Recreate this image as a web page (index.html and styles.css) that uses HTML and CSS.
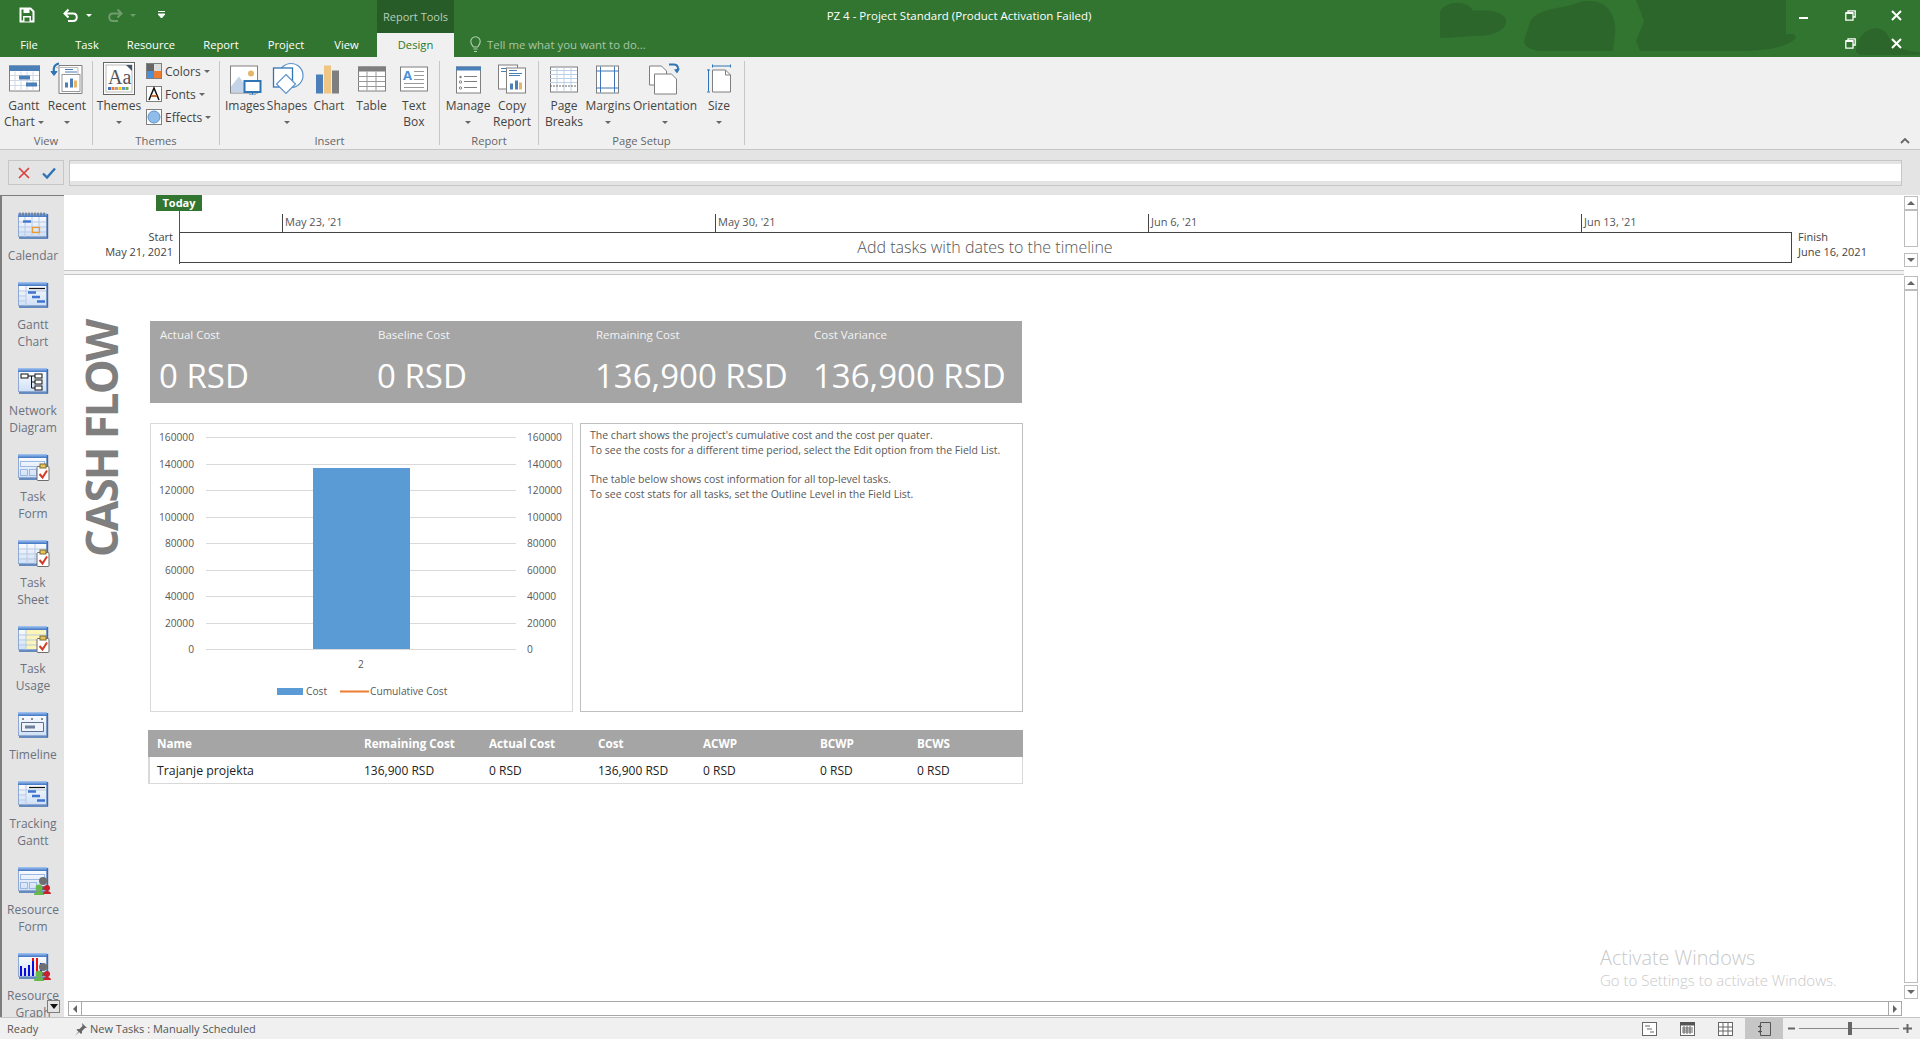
FILE: index.html
```html
<!DOCTYPE html>
<html lang="en">
<head>
<meta charset="utf-8">
<title>PZ 4 - Project Standard</title>
<link rel="stylesheet" href="styles.css">
</head>
<body>
<svg class="defs" aria-hidden="true">
  <defs>
    <linearGradient id="vb" x1="0" y1="0" x2="0" y2="1"><stop offset="0" stop-color="#ffffff"/><stop offset="1" stop-color="#cfe0f7"/></linearGradient>
    <linearGradient id="vh" x1="0" y1="0" x2="0" y2="1"><stop offset="0" stop-color="#a9c8f2"/><stop offset="1" stop-color="#3f74c4"/></linearGradient>
    <symbol id="frame" viewBox="0 0 34 30">
      <rect x="1.500" y="1.500" width="28" height="23" fill="url(#vb)" stroke="#8fa9d0"/>
      <rect x="1" y="1" width="29" height="4" fill="url(#vh)"/>
      <path d="M30.500 2v24H2" fill="none" stroke="#3a6cb4" stroke-width="1.400"/>
    </symbol>
    <symbol id="clip" viewBox="0 0 34 30">
      <rect x="20" y="13.500" width="12" height="14" rx="1" fill="#fff" stroke="#6d6d6d"/>
      <rect x="23" y="11" width="6" height="4" fill="#e8c35c" stroke="#7a6a30"/>
      <path d="M22.500 21l3 3.500 4.500-7" fill="none" stroke="#d23a22" stroke-width="2"/>
    </symbol>
    <symbol id="people" viewBox="0 0 34 30">
      <circle cx="26" cy="15" r="4" fill="#6f6f6f"/><path d="M20 24c0-5 12-5 12 0z" fill="#5f5f5f"/>
      <circle cx="22" cy="22" r="3.400" fill="#67b84a"/><path d="M17 29c0-5 10-5 10 0z" fill="#67b84a"/>
      <circle cx="30" cy="22" r="3" fill="#c8202c"/><path d="M26 28c0-4 8-4 8 0z" fill="#c8202c"/>
    </symbol>
    <symbol id="ganttv" viewBox="0 0 34 30">
      <use href="#frame" width="34" height="30"/>
      <path d="M2 10h27M2 15h7M2 20h7M9 5v20" stroke="#b9c9e2" fill="none"/>
      <path d="M12 7.500h16" stroke="#111" stroke-width="1.200"/>
      <path d="M11 11.500h8M15 16h8M20 20.500h8" stroke="#3f74d0" stroke-width="2.400"/>
    </symbol>
  </defs>
</svg>

<header class="titlebar">
  <svg class="blobs" viewBox="0 0 520 57" aria-hidden="true"><g fill="#2c662b">
    <path d="M40 12c6-12 28-12 33-1 10-2 32 0 33 9 1 10-12 16-30 16-18 1-33 2-36 2z"/>
    <path d="M130 22c6-14 35-14 44-18 24-10 44 4 41 30l-2 17H140c-8-1-15-3-16-10z"/>
    <path d="M236 0h150v34l8 0 2 4c-10 10-30 13-60 13H240l-4-10 8-20z"/>
    <path d="M456 52c0-22 24-32 32-16 6 12 20 16 32 16v-4 7h-60z"/>
  </g></svg>
  <div class="title-top">
    <div class="qat">
      <svg class="q-save" width="16" height="16" viewBox="0 0 16 16"><path d="M1.500 1.500h10l3 3v10h-13z" fill="none" stroke="#fff" stroke-width="2"/><rect x="4.500" y="2" width="6" height="4" fill="#fff"/><rect x="4" y="9" width="8" height="5" fill="#fff"/><rect x="5.500" y="10.500" width="5" height="4" fill="#327530"/></svg>
      <svg class="q-undo" width="16" height="15" viewBox="0 0 16 15"><path d="M5.500 1.500L1.500 5.500l4 4M2 5.500h8c5 0 5 7.500 0 7.500H5" fill="none" stroke="#fff" stroke-width="2"/></svg>
      <span class="caret q-c1"></span>
      <svg class="q-redo" width="16" height="15" viewBox="0 0 16 15"><path d="M10.500 1.500l4 4-4 4M14 5.500H6c-5 0-5 7.500 0 7.500h5" fill="none" stroke="#6f9d6e" stroke-width="2"/></svg>
      <span class="caret q-c2"></span>
      <svg class="q-cust" width="7" height="8" viewBox="0 0 7 8"><path d="M0 .5h7M0 3h7L3.500 7z" stroke="#fff" fill="#fff" stroke-width="1"/></svg>
    </div>
    <div class="context-label">Report Tools</div>
    <div class="doc-title">PZ 4 - Project Standard (Product Activation Failed)</div>
    <div class="winbtns">
      <svg width="10" height="10" viewBox="0 0 10 10"><path d="M0 7h9" stroke="#fff" stroke-width="2"/></svg>
      <svg class="w-rest" width="11" height="11" viewBox="0 0 11 11"><path d="M3 2.500V.8h7.200V7H8M.8 3h7.200v7.200H.8z" fill="none" stroke="#fff" stroke-width="1.300"/><path d="M1 3h7" stroke="#fff" stroke-width="2"/></svg>
      <svg class="w-close" width="11" height="11" viewBox="0 0 11 11"><path d="M1 1l9 9M10 1l-9 9" stroke="#fff" stroke-width="2"/></svg>
    </div>
  </div>
  <div class="title-tabs">
    <nav class="tabs">
      <span class="tab tab-file">File</span>
      <span class="tab tab-task">Task</span>
      <span class="tab tab-res">Resource</span>
      <span class="tab tab-rep">Report</span>
      <span class="tab tab-proj">Project</span>
      <span class="tab tab-view">View</span>
      <span class="tab tab-design">Design</span>
    </nav>
    <div class="tellme">
      <svg width="11" height="17" viewBox="0 0 11 17"><path d="M3.500 11C2 9 .8 8 .8 5.500a4.700 4.700 0 0 1 9.400 0C10.200 8 9 9 7.500 11zM3.500 13h4M4 15.500h3" fill="none" stroke="#b6d0b5" stroke-width="1.100"/></svg>
      <span>Tell me what you want to do...</span>
    </div>
    <div class="winbtns winbtns-doc">
      <svg class="w-rest" width="11" height="11" viewBox="0 0 11 11"><path d="M3 2.500V.8h7.200V7H8M.8 3h7.200v7.200H.8z" fill="none" stroke="#fff" stroke-width="1.300"/><path d="M1 3h7" stroke="#fff" stroke-width="2"/></svg>
      <svg class="w-close" width="11" height="11" viewBox="0 0 11 11"><path d="M1 1l9 9M10 1l-9 9" stroke="#fff" stroke-width="2"/></svg>
    </div>
  </div>
</header>

<section class="ribbon">
  <div class="rgroup g-view">
    <div class="rbuttons">
      <div class="rbtn w42">
        <svg class="ricon" width="34" height="32" viewBox="0 0 34 32"><rect x="2.500" y="3.500" width="30" height="25" fill="#fff" stroke="#7f7f7f"/><rect x="2" y="3" width="31" height="5.500" fill="#4a7fb8"/><path d="M8 9v19M14 9v19M20 9v19M26 9v19M3 13h29M3 18h29M3 23h29" stroke="#cfd9e6"/><rect x="12" y="13" width="11" height="4" fill="#4a7fb8"/><rect x="19" y="20" width="11" height="4" fill="#4a7fb8"/></svg>
        <span class="rlabel">Gantt<br>Chart<i class="caret-in"></i></span>
      </div>
      <div class="rbtn w44">
        <svg class="ricon" width="34" height="32" viewBox="0 0 34 32"><path d="M9 3h23v28H9z" fill="#fff" stroke="#7f7f7f"/><path d="M6 5h22v25" fill="none" stroke="#bbb"/><rect x="12" y="12" width="18" height="17" fill="#fff" stroke="#999"/><path d="M15 25v-5h3v5zM20 25v-9h3v9z" fill="#4a7fb8"/><path d="M24 25v-7h3v7z" fill="#e4b768"/><path d="M15 7h8M15 9.500h12" stroke="#4a7fb8"/><path d="M9 1C4 2 3 6 4 10" fill="none" stroke="#2f75b5" stroke-width="2.200"/><path d="M1 9l3 4 3-4z" fill="#2f75b5" stroke="#2f75b5"/></svg>
        <span class="rlabel">Recent<br><i class="caret-in only"></i></span>
      </div>
    </div>
    <div class="gname">View</div>
  </div>

  <div class="rgroup g-themes">
    <div class="rbuttons">
      <div class="rbtn w46">
        <svg class="ricon" width="34" height="33" viewBox="0 0 34 33"><rect x="1.500" y=".5" width="31" height="32" fill="#fff" stroke="#666"/><rect x="4" y="3" width="26" height="27" fill="#fff" stroke="#bbb"/><path d="M24 3h6v6z" fill="#44546a"/><text class="aa" x="6" y="22">Aa</text><g><rect x="6" y="25" width="3" height="3" fill="#4472c4"/><rect x="9.500" y="25" width="3" height="3" fill="#ed7d31"/><rect x="13" y="25" width="3" height="3" fill="#a5a5a5"/><rect x="16.500" y="25" width="3" height="3" fill="#ffc000"/><rect x="20" y="25" width="3" height="3" fill="#5b9bd5"/><rect x="23.500" y="25" width="3" height="3" fill="#70ad47"/></g></svg>
        <span class="rlabel">Themes<br><i class="caret-in only"></i></span>
      </div>
      <div class="rsmall-col">
        <div class="rsmall">
          <svg width="16" height="16" viewBox="0 0 16 16"><rect x=".5" y=".5" width="15" height="15" fill="#fff" stroke="#7f7f7f"/><rect x="1" y="1" width="7" height="7" fill="#666"/><rect x="8" y="1" width="7" height="7" fill="#ddd"/><rect x="1" y="8" width="7" height="7" fill="#4a90d9"/><rect x="8" y="8" width="7" height="7" fill="#ed7d31"/></svg>
          <span>Colors</span><i class="caret-in"></i>
        </div>
        <div class="rsmall">
          <svg width="16" height="16" viewBox="0 0 16 16"><rect x=".5" y=".5" width="15" height="15" fill="#fff" stroke="#7f7f7f"/><path d="M3 14L8 2l5 12M5 10h6" fill="none" stroke="#111" stroke-width="1.500"/><path d="M5 10h6" stroke="#ed7d31" stroke-width="1.500"/></svg>
          <span>Fonts</span><i class="caret-in"></i>
        </div>
        <div class="rsmall">
          <svg width="16" height="16" viewBox="0 0 16 16"><rect x=".5" y=".5" width="15" height="15" fill="#fff" stroke="#7f7f7f"/><circle cx="8" cy="8" r="6" fill="#8fbce8" stroke="#5c93cc"/></svg>
          <span>Effects</span><i class="caret-in"></i>
        </div>
      </div>
    </div>
    <div class="gname">Themes</div>
  </div>

  <div class="rgroup g-insert">
    <div class="rbuttons">
      <div class="rbtn w42">
        <svg class="ricon" width="34" height="32" viewBox="0 0 34 32"><rect x="2.500" y="3.500" width="27" height="27" fill="#fff" stroke="#7f7f7f"/><circle cx="23" cy="11" r="3" fill="#e4b768"/><path d="M3 30v-6l8-10 12 16z" fill="#c3d4e8"/><rect x="16.500" y="18.500" width="16" height="11" fill="#fff" stroke="#2f75b5" stroke-width="2"/><path d="M24.500 30v2M21 32.500h7" stroke="#2f75b5"/></svg>
        <span class="rlabel">Images</span>
      </div>
      <div class="rbtn w42">
        <svg class="ricon" width="34" height="32" viewBox="0 0 34 32"><circle cx="21" cy="13" r="12" fill="#fff" stroke="#5c93cc" stroke-width="1.200"/><rect x="3.500" y="5.500" width="19" height="19" fill="#fff" stroke="#2f75b5" stroke-width="1.300"/><path d="M16 15l9.500 9.500L16 34 6.500 24.500z" transform="translate(0 -3)" fill="#fff" stroke="#5c93cc" stroke-width="1.200"/></svg>
        <span class="rlabel">Shapes<br><i class="caret-in only"></i></span>
      </div>
      <div class="rbtn w42">
        <svg class="ricon" width="34" height="32" viewBox="0 0 34 32"><rect x="4" y="12" width="7" height="19" fill="#4a7fb8"/><rect x="12" y="3" width="7" height="28" fill="#eec583"/><rect x="20" y="8" width="7" height="23" fill="#7f7f7f"/></svg>
        <span class="rlabel">Chart</span>
      </div>
      <div class="rbtn w43">
        <svg class="ricon" width="34" height="32" viewBox="0 0 34 32"><rect x="3.500" y="4.500" width="27" height="24" fill="#fff" stroke="#7f7f7f"/><rect x="3" y="4" width="28" height="5" fill="#7f7f7f"/><path d="M12 9v19M21 9v19M3 14h27M3 19h27M3 24h27" stroke="#999"/></svg>
        <span class="rlabel">Table</span>
      </div>
      <div class="rbtn w42">
        <svg class="ricon" width="34" height="32" viewBox="0 0 34 32"><rect x="3.500" y="4.500" width="27" height="24" fill="#fff" stroke="#7f7f7f"/><text class="tb-a" x="6" y="17">A</text><path d="M17 9h10M17 13h10M17 17h10M7 21h20M7 25h20" stroke="#999"/></svg>
        <span class="rlabel">Text<br>Box</span>
      </div>
    </div>
    <div class="gname">Insert</div>
  </div>

  <div class="rgroup g-report">
    <div class="rbuttons">
      <div class="rbtn w48">
        <svg class="ricon" width="34" height="32" viewBox="0 0 34 32"><rect x="5.500" y="4.500" width="24" height="26" fill="#fff" stroke="#7f7f7f"/><rect x="5" y="4" width="25" height="4" fill="#4a7fb8"/><path d="M13 14h13M13 19h13M13 25h13" stroke="#7f7f7f"/><circle cx="9.500" cy="14.500" r="1.200" fill="#7f7f7f"/><circle cx="9.500" cy="19.500" r="1.200" fill="none" stroke="#7f7f7f"/><circle cx="9.500" cy="25.500" r="1.200" fill="none" stroke="#7f7f7f"/></svg>
        <span class="rlabel">Manage<br><i class="caret-in only"></i></span>
      </div>
      <div class="rbtn w40">
        <svg class="ricon" width="34" height="32" viewBox="0 0 34 32"><rect x="3.500" y="2.500" width="19" height="24" fill="#fff" stroke="#7f7f7f"/><rect x="11.500" y="5.500" width="19" height="25" fill="#fff" stroke="#7f7f7f"/><path d="M14 8h8M14 11h13M14 13h11M6 6h5M6 9h5" stroke="#4a7fb8"/><path d="M15 27v-6h3v6zM20 27v-9h3v9z" fill="#4a7fb8"/><path d="M24 27v-7h3v7z" fill="#e4b768"/></svg>
        <span class="rlabel">Copy<br>Report</span>
      </div>
    </div>
    <div class="gname">Report</div>
  </div>

  <div class="rgroup g-page">
    <div class="rbuttons">
      <div class="rbtn w42">
        <svg class="ricon" width="34" height="32" viewBox="0 0 34 32"><rect x="3.500" y="4.500" width="27" height="25" fill="#fff" stroke="#7f7f7f"/><path d="M3 8h27M3 12h27M3 16h27M3 20h27M10 5v24M17 5v24M24 5v24" stroke="#bcd0e8"/><path d="M3 23.500h27" stroke="#666" stroke-dasharray="2 1"/></svg>
        <span class="rlabel">Page<br>Breaks</span>
      </div>
      <div class="rbtn w46">
        <svg class="ricon" width="34" height="32" viewBox="0 0 34 32"><rect x="5.500" y="3.500" width="22" height="27" fill="#fff" stroke="#7f7f7f"/><path d="M5 8.500h23M5 25.500h23M9.500 4v26M23.500 4v26" stroke="#3f74b5"/></svg>
        <span class="rlabel">Margins<br><i class="caret-in only"></i></span>
      </div>
      <div class="rbtn w68">
        <svg class="ricon" width="34" height="32" viewBox="0 0 34 32"><path d="M1.500 3.500h12l5 5v14h-17z" fill="#fff" stroke="#7f7f7f"/><path d="M6.500 12.500h17l5 5v15h-22z" transform="translate(0 -1)" fill="#fff" stroke="#7f7f7f"/><path d="M21 2h5c4 0 5 4 3 7" fill="none" stroke="#2f75b5" stroke-width="2"/><path d="M26 7l3 4 3-5z" fill="#2f75b5"/></svg>
        <span class="rlabel">Orientation<br><i class="caret-in only"></i></span>
      </div>
      <div class="rbtn w40">
        <svg class="ricon" width="34" height="32" viewBox="0 0 34 32"><path d="M10.500 7.500h13l5 5v17h-18z" fill="#fff" stroke="#7f7f7f"/><path d="M23.500 7.500v5h5" fill="none" stroke="#7f7f7f"/><path d="M10 3.500h19M10.500 2v3M28.500 2v3M6.500 7v22M5 7.500h3M5 29.500h3" stroke="#2f75b5"/></svg>
        <span class="rlabel">Size<br><i class="caret-in only"></i></span>
      </div>
    </div>
    <div class="gname">Page Setup</div>
  </div>
  <svg class="collapse" width="10" height="6" viewBox="0 0 10 6"><path d="M1 5l4-4 4 4" fill="none" stroke="#666" stroke-width="1.800"/></svg>
</section>

<section class="formula">
  <div class="f-actions">
    <svg width="12" height="12" viewBox="0 0 12 12"><path d="M1 1l10 10M11 1L1 11" stroke="#d8433e" stroke-width="1.700"/></svg>
    <svg width="14" height="12" viewBox="0 0 14 12"><path d="M1 6.500l4 4L13 1.500" fill="none" stroke="#2f75b5" stroke-width="2.400"/></svg>
  </div>
  <div class="f-input"><div class="f-white"></div></div>
</section>

<main class="workspace">
  <aside class="viewbar">
    <div class="vitem">
      <svg width="34" height="30" viewBox="0 0 34 30"><use href="#frame" width="34" height="30"/><path d="M2 10h27M2 15h27M2 20h27M8 5v20M15 5v20M22 5v20" stroke="#b9c9e2"/><path d="M3 .5v3M6 .5v3M9 .5v3M12 .5v3M15 .5v3M18 .5v3M21 .5v3M24 .5v3M27 .5v3" stroke="#555"/><path d="M6 9.500h8" stroke="#3f74d0" stroke-width="2.400"/><rect x="15.500" y="15.500" width="7" height="5" fill="none" stroke="#ee9a2e" stroke-width="1.300"/></svg>
      <span>Calendar</span>
    </div>
    <div class="vitem">
      <svg width="34" height="30" viewBox="0 0 34 30"><use href="#ganttv" width="34" height="30"/></svg>
      <span>Gantt<br>Chart</span>
    </div>
    <div class="vitem">
      <svg width="34" height="30" viewBox="0 0 34 30"><use href="#frame" width="34" height="30"/><g fill="#fff" stroke="#111"><rect x="4" y="7" width="7" height="4"/><rect x="18" y="7" width="7" height="4"/><rect x="18" y="13" width="7" height="4"/><rect x="18" y="19" width="7" height="4"/></g><path d="M11 9h7M14.500 9v12H18M14.500 15H18" fill="none" stroke="#111"/></svg>
      <span>Network<br>Diagram</span>
    </div>
    <div class="vitem">
      <svg width="34" height="30" viewBox="0 0 34 30"><use href="#frame" width="34" height="30"/><rect x="3.500" y="8.500" width="24" height="5" fill="none" stroke="#9db8e2"/><rect x="3.500" y="16.500" width="7" height="6" fill="none" stroke="#9db8e2"/><rect x="12.500" y="16.500" width="7" height="6" fill="none" stroke="#9db8e2"/><use href="#clip" width="34" height="30"/></svg>
      <span>Task<br>Form</span>
    </div>
    <div class="vitem">
      <svg width="34" height="30" viewBox="0 0 34 30"><use href="#frame" width="34" height="30"/><path d="M2 10h27M2 15h27M2 20h27M10 5v20M18 5v20" stroke="#b9c9e2"/><use href="#clip" width="34" height="30"/></svg>
      <span>Task<br>Sheet</span>
    </div>
    <div class="vitem">
      <svg width="34" height="30" viewBox="0 0 34 30"><use href="#frame" width="34" height="30"/><rect x="9" y="5" width="20" height="19" fill="#fdf6b8"/><path d="M2 10h27M2 15h27M2 20h27M9 5v20" stroke="#b9c9e2"/><use href="#clip" width="34" height="30"/></svg>
      <span>Task<br>Usage</span>
    </div>
    <div class="vitem">
      <svg width="34" height="30" viewBox="0 0 34 30"><use href="#frame" width="34" height="30"/><path d="M4.500 11.500h22v9h-22z" fill="#eef3fb" stroke="#5c6f8c"/><rect x="8" y="14.500" width="10" height="3" fill="#6d7f9c"/><path d="M5 8h2M14 8h2M24 8h2" stroke="#222"/></svg>
      <span>Timeline</span>
    </div>
    <div class="vitem">
      <svg width="34" height="30" viewBox="0 0 34 30"><use href="#ganttv" width="34" height="30"/></svg>
      <span>Tracking<br>Gantt</span>
    </div>
    <div class="vitem">
      <svg width="34" height="30" viewBox="0 0 34 30"><use href="#frame" width="34" height="30"/><rect x="3.500" y="8.500" width="24" height="5" fill="none" stroke="#9db8e2"/><rect x="3.500" y="16.500" width="7" height="6" fill="none" stroke="#9db8e2"/><rect x="12.500" y="16.500" width="7" height="6" fill="none" stroke="#9db8e2"/><use href="#people" width="34" height="30"/></svg>
      <span>Resource<br>Form</span>
    </div>
    <div class="vitem">
      <svg width="34" height="30" viewBox="0 0 34 30"><use href="#frame" width="34" height="30"/><path d="M3 14h2v10H3zM7 16h2v8H7zM11 13h2v11h-2zM15 9h2v15h-2zM23 11h2v13h-2z" fill="#0b0be0"/><path d="M19 6h2v18h-2zM15 6h2v3h-2z" fill="#ea1010"/><use href="#people" width="34" height="30"/></svg>
      <span>Resource<br>Graph</span>
    </div>
    <div class="vb-more"><svg width="8" height="5" viewBox="0 0 8 5"><path d="M0 0h8L4 5z" fill="#111"/></svg></div>
  </aside>

  <div class="content">
    <div class="timeline-row">
      <div class="timeline">
        <div class="tl-scale">
          <span class="tick">May 23, '21</span>
          <span class="tick">May 30, '21</span>
          <span class="tick">Jun 6, '21</span>
          <span class="tick">Jun 13, '21</span>
        </div>
        <div class="tl-body">
          <div class="tl-start">Start<br>May 21, 2021</div>
          <div class="tl-bar">Add tasks with dates to the timeline
            <div class="today"><span class="today-flag">Today</span></div>
          </div>
          <div class="tl-finish">Finish<br>June 16, 2021</div>
        </div>
      </div>
      <div class="vscroll vs-small">
        <span class="sbtn"><i class="tri-up"></i></span>
        <span class="thumb th-small"></span>
        <span class="sbtn"><i class="tri-down"></i></span>
      </div>
    </div>
    <div class="splitter"></div>
    <div class="report-row">
      <div class="report">
        <h1 class="report-title">CASH FLOW</h1>
        <div class="report-body">
          <div class="kpis">
            <div class="kpi"><div class="kpi-label">Actual Cost</div><div class="kpi-value">0 RSD</div></div>
            <div class="kpi"><div class="kpi-label">Baseline Cost</div><div class="kpi-value">0 RSD</div></div>
            <div class="kpi"><div class="kpi-label">Remaining Cost</div><div class="kpi-value">136,900 RSD</div></div>
            <div class="kpi"><div class="kpi-label">Cost Variance</div><div class="kpi-value">136,900 RSD</div></div>
          </div>
          <div class="panels">
            <div class="chart">
              <svg width="421" height="287" viewBox="0 0 421 287">
                <g class="gridlines">
                  <path d="M55 13.500h310M55 40.500h310M55 66.500h310M55 93.500h310M55 119.500h310M55 146.500h310M55 172.500h310M55 199.500h310M55 225.500h310"/>
                </g>
                <rect x="162" y="44" width="97" height="181" fill="#5b9bd5"/>
                <g class="axis-l">
                  <text x="43" y="17">160000</text><text x="43" y="44">140000</text><text x="43" y="70">120000</text><text x="43" y="97">100000</text><text x="43" y="123">80000</text><text x="43" y="150">60000</text><text x="43" y="176">40000</text><text x="43" y="203">20000</text><text x="43" y="229">0</text>
                </g>
                <g class="axis-r">
                  <text x="376" y="17">160000</text><text x="376" y="44">140000</text><text x="376" y="70">120000</text><text x="376" y="97">100000</text><text x="376" y="123">80000</text><text x="376" y="150">60000</text><text x="376" y="176">40000</text><text x="376" y="203">20000</text><text x="376" y="229">0</text>
                </g>
                <text class="axis-c" x="210" y="244">2</text>
                <rect x="126" y="264" width="26" height="7" fill="#5b9bd5"/>
                <text class="legend" x="155" y="271">Cost</text>
                <path d="M189 267.500h29" stroke="#ed7d31" stroke-width="2"/>
                <text class="legend" x="219" y="271">Cumulative Cost</text>
              </svg>
            </div>
            <div class="notes">
              <p>The chart shows the project's cumulative cost and the cost per quater.<br>To see the costs for a different time period, select the Edit option from the Field List.</p>
              <p>The table below shows cost information for all top-level tasks.<br>To see cost stats for all tasks, set the Outline Level in the Field List.</p>
            </div>
          </div>
          <div class="ctable">
            <div class="ct-row ct-head">
              <span>Name</span><span>Remaining Cost</span><span>Actual Cost</span><span>Cost</span><span>ACWP</span><span>BCWP</span><span>BCWS</span>
            </div>
            <div class="ct-row ct-data">
              <span>Trajanje projekta</span><span>136,900 RSD</span><span>0 RSD</span><span>136,900 RSD</span><span>0 RSD</span><span>0 RSD</span><span>0 RSD</span>
            </div>
          </div>
        </div>
        <div class="activate">
          <div class="act-1">Activate Windows</div>
          <div class="act-2">Go to Settings to activate Windows.</div>
        </div>
      </div>
      <div class="vscroll">
        <span class="sbtn"><i class="tri-up"></i></span>
        <span class="thumb"></span>
        <span class="sbtn"><i class="tri-down"></i></span>
      </div>
    </div>
    <div class="hscroll">
      <span class="sbtn"><i class="tri-left"></i></span>
      <span class="hthumb"></span>
      <span class="sbtn"><i class="tri-right"></i></span>
    </div>
  </div>
</main>

<footer class="status">
  <span class="st-ready">Ready</span>
  <svg class="st-pin" width="14" height="14" viewBox="0 0 14 14"><path d="M8 1l5 5-2 0-3 3 0 2-1 1-2-2-4 4 3.500-4.500L2.500 8l1-1 2 0 3-3z" fill="#666"/></svg>
  <span class="st-new">New Tasks : Manually Scheduled</span>
  <div class="st-right">
    <svg class="st-v" width="15" height="14" viewBox="0 0 15 14"><rect x=".5" y=".5" width="14" height="13" fill="#fff" stroke="#666"/><path d="M3 4h5M5 7h5M8 10h4" stroke="#666"/></svg>
    <svg class="st-v" width="15" height="14" viewBox="0 0 15 14"><rect x=".5" y=".5" width="14" height="13" fill="#fff" stroke="#666"/><rect x="0" y="0" width="15" height="3.500" fill="#555"/><path d="M2 6h11M2 8h11M2 10h11M4 4v8M7 4v8M10 4v8" stroke="#666"/></svg>
    <svg class="st-v" width="15" height="14" viewBox="0 0 15 14"><rect x=".5" y=".5" width="14" height="13" fill="#fff" stroke="#666"/><path d="M1 5h13M1 9h13M5 1v12M10 1v12" stroke="#666"/></svg>
    <div class="st-active"><svg width="14" height="14" viewBox="0 0 14 14"><path d="M3.500.5h10v13h-10zM1 4.500h4M1 9.500h4M3 3v3M3 8v3" fill="none" stroke="#555"/></svg></div>
    <div class="zoom">
      <svg width="7" height="3" viewBox="0 0 7 3"><path d="M0 1.500h7" stroke="#666" stroke-width="2"/></svg>
      <div class="zoom-track"><span class="zoom-thumb"></span></div>
      <svg width="9" height="9" viewBox="0 0 9 9"><path d="M0 4.500h9M4.500 0v9" stroke="#666" stroke-width="2"/></svg>
    </div>
  </div>
</footer>
</body>
</html>
```
FILE: styles.css
```css
* { box-sizing: border-box; }
html, body { margin: 0; height: 100%; }
body {
  width: 1920px; height: 1039px; overflow: hidden;
  display: flex; flex-direction: column;
  font-family: "Open Sans", "Noto Sans", sans-serif;
  font-size: 12px; color: #444; background: #e4e4e4;
}
.defs { position: absolute; width: 0; height: 0; }

/* title bar */
.titlebar { position: relative; height: 57px; flex: none; background: #327530; color: #fff; display: flex; flex-direction: column; }
.blobs { position: absolute; right: 0; top: 0; width: 520px; height: 57px; }
.title-top { position: relative; height: 33px; display: flex; align-items: center; }
.qat { width: 377px; flex: none; height: 33px; display: flex; align-items: center; padding-left: 19px; }
.q-save { margin-top: -3px; }
.q-undo { margin-left: 28px; margin-top: -3px; }
.caret { display: block; width: 0; height: 0; border-left: 3px solid transparent; border-right: 3px solid transparent; border-top: 3px solid #fff; }
.q-c1 { margin-left: 7px; margin-top: -3px; }
.q-redo { margin-left: 15px; margin-top: -3px; }
.q-c2 { margin-left: 7px; border-top-color: #6f9d6e; margin-top: -3px; }
.q-cust { margin-left: 22px; margin-top: -4px; }
.context-label { width: 77px; flex: none; height: 33px; background: #275c28; color: #b9cfb8; text-align: center; line-height: 33px; font-size: 11px; }
.doc-title { flex: none; width: 1010px; text-align: center; margin-top: -2px; font-size: 11.500px; }
.winbtns { position: relative; display: flex; align-items: center; padding-right: 18px; margin-top: -2px; margin-left: auto; }
.winbtns svg { display: block; }
.w-rest { margin-left: 36px; }
.w-close { margin-left: 35px; }
.title-tabs { position: relative; height: 24px; display: flex; align-items: center; }
.tabs { display: flex; width: 454px; height: 24px; flex: none; font-size: 11.200px; }
.tab { height: 24px; line-height: 24px; text-align: center; flex: none; }
.tab-file { width: 58px; }
.tab-task { width: 58px; }
.tab-res { width: 70px; }
.tab-rep { width: 70px; }
.tab-proj { width: 60px; }
.tab-view { width: 61px; }
.tab-design { width: 77px; background: #f0f0f0; color: #2a7a2a; }
.tellme { display: flex; align-items: center; gap: 6px; margin-left: 16px; margin-top: -2px; color: #a9c6a8; font-size: 11.400px; }
.winbtns-doc { margin-top: -3px; }

/* ribbon */
.ribbon { position: relative; height: 93px; flex: none; background: #f0f0f0; border-bottom: 1px solid #c6c6c6; display: flex; padding-top: 4px; }
.rgroup { height: 84px; border-right: 1px solid #c6c6c6; display: flex; flex-direction: column; flex: none; position: relative; }
.g-view { width: 93px; }
.g-themes { width: 127px; }
.g-insert { width: 220px; }
.g-report { width: 99px; }
.g-page { width: 206px; }
.rbuttons { display: flex; padding: 1px 0 0 3px; flex: 1; min-height: 0; }
.g-insert .rbuttons, .g-report .rbuttons, .g-page .rbuttons { padding-left: 4px; }
.rbtn { display: flex; flex-direction: column; align-items: center; flex: none; }
.w40 { width: 40px; } .w42 { width: 42px; } .w43 { width: 43px; } .w44 { width: 44px; }
.w46 { width: 46px; } .w48 { width: 48px; } .w68 { width: 68px; }
.ricon { display: block; height: 33px; flex: none; }
.rlabel { display: block; text-align: center; line-height: 16px; margin-top: 3px; white-space: nowrap; color: #444; }
.caret-in { display: inline-block; width: 0; height: 0; border-left: 3px solid transparent; border-right: 3px solid transparent; border-top: 3px solid #666; margin-left: 3px; vertical-align: middle; }
.caret-in.only { margin-left: 0; }
.gname { position: absolute; left: 0; right: 0; top: 72px; text-align: center; line-height: 16px; color: #666; font-size: 11.200px; }
.rsmall-col { display: flex; flex-direction: column; gap: 7px; margin: 1px 0 0 4px; }
.rsmall { display: flex; align-items: center; height: 16px; gap: 3px; }
.rsmall .caret-in { margin-left: 0; }
.rsmall svg { flex: none; }
.aa { font: 20px "Liberation Serif", serif; fill: #555; }
.tb-a { font: bold 13px "Open Sans", sans-serif; fill: #4a90d9; }
.collapse { position: absolute; right: 10px; bottom: 5px; }

/* formula */
.formula { height: 45px; flex: none; display: flex; align-items: flex-start; padding: 10px 18px 0 8px; gap: 5px; background: #e4e4e4; }
.f-actions { width: 56px; height: 25px; border: 1px solid #c6c6c6; display: flex; align-items: center; padding-left: 9px; gap: 12px; }
.f-input { flex: 1; height: 26px; border: 1px solid #c6c6c6; padding-top: 3px; }
.f-white { height: 17px; background: #fff; }

/* workspace */
.workspace { flex: 1; min-height: 0; display: flex; }
.viewbar { position: relative; width: 64px; flex: none; overflow: hidden; background: #e4e4e4; border-left: 2px solid #7d7d7d; border-top: 1px solid #7d7d7d; padding-top: 16px; }
.vitem { display: flex; flex-direction: column; align-items: center; height: 86px; line-height: 17px; color: #6b7280; text-align: center; }
.vitem svg { flex: none; width: 34px; height: 30px; margin: 0 0 5px 1px; }
.vitem:nth-child(1), .vitem:nth-child(7) { height: 69px; }
.vb-more { position: absolute; right: 4px; bottom: 4px; width: 13px; height: 13px; background: #e4e4e4; border: 1px solid #7d7d7d; display: flex; align-items: center; justify-content: center; }
.content { flex: 1; min-width: 0; display: flex; flex-direction: column; background: #fff; }

/* timeline */
.timeline-row { height: 75px; flex: none; display: flex; }
.timeline { flex: 1; min-width: 0; padding-top: 19px; }
.tl-scale { display: flex; height: 18px; padding-left: 218px; }
.tick { flex: 0 0 433px; border-left: 1px solid #444; padding: 0 0 0 2px; font-size: 11px; line-height: 16px; color: #555; }
.tl-body { display: flex; height: 31px; }
.tl-start { width: 115px; padding-right: 6px; margin-top: -3px; text-align: right; font-size: 11px; line-height: 15px; color: #444; flex: none; }
.tl-bar { position: relative; width: 1613px; flex: none; border: 1px solid #444; border-left: 0; text-align: center; font-size: 16px; font-weight: 300; line-height: 29px; color: #555; }
.tl-finish { padding-left: 6px; margin-top: -3px; font-size: 11px; line-height: 15px; color: #444; }
.today { position: absolute; left: 0; bottom: -2px; height: 53px; width: 1px; background: #2f6b2f; }
.today-flag { position: absolute; left: -23px; top: -16px; width: 46px; height: 16px; background: #327530; color: #fff; font-weight: 700; font-size: 11px; line-height: 15px; text-align: center; }
.splitter { height: 5px; flex: none; margin-right: 16px; border-top: 1px solid #c6c6c6; border-bottom: 1px solid #c6c6c6; background: #f0f0f0; }

/* scrollbars */
.vscroll { width: 16px; flex: none; display: flex; flex-direction: column; padding: 1px 2px 2px 0; }
.sbtn { flex: none; width: 14px; height: 14px; background: #fff; border: 1px solid #bdbdbd; display: flex; align-items: center; justify-content: center; }
.thumb { flex: 1; border: 1px solid #bdbdbd; margin-bottom: 2px; }
.th-small { flex: none; height: 37px; margin-bottom: 6px; }
.tri-up, .tri-down, .tri-left, .tri-right { display: block; width: 0; height: 0; }
.tri-up { border-left: 4px solid transparent; border-right: 4px solid transparent; border-bottom: 4px solid #666; }
.tri-down { border-left: 4px solid transparent; border-right: 4px solid transparent; border-top: 4px solid #666; }
.tri-left { border-top: 4px solid transparent; border-bottom: 4px solid transparent; border-right: 4px solid #666; }
.tri-right { border-top: 4px solid transparent; border-bottom: 4px solid transparent; border-left: 4px solid #666; }
.report-row { flex: 1; min-height: 0; display: flex; }
.hscroll { height: 16px; flex: none; display: flex; padding: 0 18px 1px 4px; }
.hscroll .sbtn { height: 15px; border-color: #a8a8a8; }
.hthumb { flex: 1; border: 1px solid #a8a8a8; border-left: 0; border-right: 0; }

/* report */
.report { position: relative; flex: 1; min-width: 0; display: flex; padding: 46px 0 0 19px; background: #fff; }
.report-title { margin: 0; width: 65px; height: 240px; flex: none; writing-mode: vertical-rl; transform: rotate(180deg); font-size: 44px; font-weight: 700; letter-spacing: -2px; line-height: 36px; color: #7f7f7f; white-space: nowrap; text-align: right; }
.report-body { width: 875px; flex: none; }
.kpis { display: grid; grid-template-columns: repeat(4, 218px); margin-left: 2px; width: 872px; height: 82px; background: #a5a5a5; padding: 5px 0 0 10px; color: #fff; }
.kpi-label { font-size: 11.500px; line-height: 18px; color: #f4f4f4; }
.kpi-value { font-size: 33px; line-height: 44px; margin: 10px 0 0 -1px; white-space: nowrap; }
.panels { display: flex; gap: 7px; margin: 20px 0 0 2px; }
.chart { width: 423px; height: 289px; border: 1px solid #d9d9d9; }
.chart svg { display: block; }
.gridlines path { stroke: #d9d9d9; fill: none; }
.axis-l text { text-anchor: end; font-size: 10.200px; fill: #595959; }
.axis-r text { font-size: 10.200px; fill: #595959; }
.axis-c { text-anchor: middle; font-size: 10.200px; fill: #595959; }
.legend { font-size: 10.200px; fill: #595959; }
.notes { width: 443px; height: 289px; border: 1px solid #bfbfbf; padding: 4px 9px; font-size: 10.500px; line-height: 15px; color: #595959; }
.notes p { margin: 0 0 14px; white-space: nowrap; }
.ctable { margin-top: 18px; width: 875px; }
.ct-row { display: grid; grid-template-columns: 207px 125px 109px 105px 117px 97px 1fr; align-items: center; padding-left: 9px; font-size: 12px; }
.ct-head { height: 27px; background: #a5a5a5; color: #fff; font-weight: 700; font-size: 11.700px; padding-bottom: 1px; }
.ct-data { height: 27px; color: #222; border: 1px solid #d9d9d9; border-top: 0; padding: 1px 0 0 7px; border-left-width: 2px; }
.ct-data span:first-child { font-size: 12.300px; }
.activate { position: absolute; left: 1536px; top: 671px; color: #c9c9c9; white-space: nowrap; }
.act-1 { font-size: 19.800px; line-height: 24px; font-weight: 300; }
.act-2 { font-size: 15px; line-height: 20px; font-weight: 300; }

/* status */
.status { height: 22px; flex: none; background: #f0f0f0; border-top: 1px solid #c6c6c6; display: flex; align-items: center; font-size: 11px; color: #555; }
.st-ready { width: 74px; padding-left: 7px; }
.st-pin { margin-right: 2px; }
.st-right { margin-left: auto; display: flex; align-items: center; height: 21px; }
.st-v { margin-right: 23px; display: block; }
.st-active { width: 38px; height: 21px; background: #c6c6c6; display: flex; align-items: center; justify-content: center; margin-left: -11px; margin-right: 5px; }
.zoom { display: flex; align-items: center; gap: 4px; padding-right: 8px; }
.zoom-track { position: relative; width: 100px; height: 1px; background: #888; }
.zoom-thumb { position: absolute; left: 49px; top: -6px; width: 4px; height: 13px; background: #666; }
```
